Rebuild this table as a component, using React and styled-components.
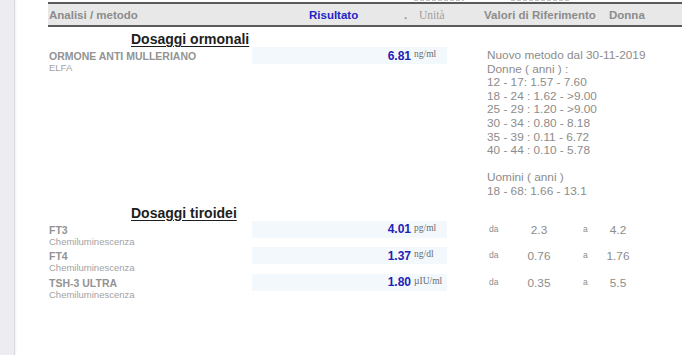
import React from "react";
import styled, { createGlobalStyle } from "styled-components";

const GlobalStyle = createGlobalStyle`
  html, body {
    margin: 0;
    padding: 0;
    background: #ffffff;
  }
  body {
    font-family: "Liberation Sans", Arial, sans-serif;
  }
`;

const ormone = {
  name: "ORMONE ANTI MULLERIANO",
  method: "ELFA",
  value: "6.81",
  unit: "ng/ml",
  notes: [
    "Nuovo metodo dal 30-11-2019",
    "Donne ( anni ) :",
    "12 - 17: 1.57 - 7.60",
    "18 - 24 : 1.62 - >9.00",
    "25 - 29 : 1.20 - >9.00",
    "30 - 34 : 0.80 - 8.18",
    "35 - 39 : 0.11 - 6.72",
    "40 - 44 : 0.10 - 5.78",
    "",
    "Uomini ( anni )",
    "18 - 68: 1.66 - 13.1",
  ],
};

const tiroidei = [
  { name: "FT3", method: "Chemiluminescenza", value: "4.01", unit: "pg/ml", from: "2.3", to: "4.2" },
  { name: "FT4", method: "Chemiluminescenza", value: "1.37", unit: "ng/dl", from: "0.76", to: "1.76" },
  { name: "TSH-3 ULTRA", method: "Chemiluminescenza", value: "1.80", unit: "µIU/ml", from: "0.35", to: "5.5" },
];

function App() {
  return (
    <>
      <GlobalStyle />
      <Page>
        <SideStrip />
        <Sheet>
          {/* bottom edge of the previous page line, scrolled mostly out of view */}
          <CutLine>
            <CutMark width={50} />
            <CutMark width={60} />
          </CutLine>
          <Report>
            <HeaderRow>
              <HeadCell width={260}>Analisi / metodo</HeadCell>
              <HeadCell width={95} blue>Risultato</HeadCell>
              <HeadCell width={15}>.</HeadCell>
              <HeadCell width={65} serif>Unità</HeadCell>
              <HeadCell width={125}>Valori di Riferimento</HeadCell>
              <HeadCell>Donna</HeadCell>
            </HeaderRow>

            <SectionTitle>
              <span>Dosaggi ormonali</span>
            </SectionTitle>
            <ResultRow>
              <NameCell>
                <TestName>{ormone.name}</TestName>
                <Method>{ormone.method}</Method>
              </NameCell>
              <ValueCell>
                <Value>{ormone.value}</Value>
                <Unit>{ormone.unit}</Unit>
              </ValueCell>
              <Notes>
                {ormone.notes.map((line, i) => (
                  <NoteLine key={i}>{line || "\u00a0"}</NoteLine>
                ))}
              </Notes>
            </ResultRow>

            <SectionTitle>
              <span>Dosaggi tiroidei</span>
            </SectionTitle>
            {tiroidei.map((t) => (
              <ResultRow key={t.name} compact>
                <NameCell>
                  <TestName>{t.name}</TestName>
                  <Method>{t.method}</Method>
                </NameCell>
                <ValueCell>
                  <Value>{t.value}</Value>
                  <Unit>{t.unit}</Unit>
                </ValueCell>
                <Range>
                  <RangeWord>da</RangeWord>
                  <RangeNum>{t.from}</RangeNum>
                  <RangeWord center>a</RangeWord>
                  <RangeNum>{t.to}</RangeNum>
                </Range>
              </ResultRow>
            ))}
          </Report>
        </Sheet>
      </Page>
    </>
  );
}

const Page = styled.div`
  display: flex;
  width: 700px;
  height: 355px;
  overflow: hidden;
  background: #ffffff;
`;

const SideStrip = styled.div`
  width: 14px;
  flex-shrink: 0;
  background: #ececf1;
  border-right: 1px solid #d9d9df;
  box-shadow: 1px 0 2px rgba(0, 0, 0, 0.06);
`;

const Sheet = styled.div`
  flex: 1;
  padding-left: 33px;
`;

const CutLine = styled.div`
  height: 2px;
  display: flex;
  align-items: flex-start;
  padding-left: 366px;
  gap: 47px;
`;

const CutMark = styled.div`
  width: ${(p) => p.width}px;
  height: 1px;
  background: repeating-linear-gradient(
    90deg,
    #c4c4c4 0 4px,
    transparent 4px 6px
  );
`;

const Report = styled.div`
  width: 634px;
`;

const HeaderRow = styled.div`
  display: flex;
  align-items: center;
  height: 21px;
  background: #e8e8e8;
  border-top: 2px solid #5a5a5a;
  border-bottom: 2px solid #5a5a5a;
`;

const HeadCell = styled.div`
  width: ${(p) => (p.width ? `${p.width}px` : "auto")};
  flex-shrink: 0;
  padding-left: 1px;
  box-sizing: border-box;
  font-family: ${(p) => (p.serif ? '"Liberation Serif", "Times New Roman", serif' : '"Liberation Sans", Arial, sans-serif')};
  font-size: 11.5px;
  font-weight: ${(p) => (p.serif ? 400 : 700)};
  color: ${(p) => (p.blue ? "#2424c4" : p.serif ? "#a0a0a0" : "#8c8c8c")};
  white-space: nowrap;
`;

const SectionTitle = styled.div`
  padding-left: 83px;
  margin-top: 3px;
  height: 17px;
  line-height: 17px;

  span {
    font-size: 14px;
    font-weight: 700;
    color: #1e1e1e;
    text-decoration: underline;
    text-underline-offset: 2px;
  }
`;

const ResultRow = styled.div`
  display: flex;
  align-items: flex-start;
  min-height: ${(p) => (p.compact ? "26.5px" : "auto")};
  padding-bottom: ${(p) => (p.compact ? "0" : "2px")};
`;

const NameCell = styled.div`
  width: 204px;
  flex-shrink: 0;
  padding-top: 3px;
  padding-left: 1px;
  box-sizing: border-box;
`;

const TestName = styled.div`
  font-size: 10.5px;
  line-height: 12px;
  font-weight: 700;
  color: #939393;
  white-space: nowrap;
`;

const Method = styled.div`
  font-size: 9.5px;
  line-height: 11px;
  color: #a2a2a2;
`;

const ValueCell = styled.div`
  width: 195px;
  height: 17px;
  flex-shrink: 0;
  display: flex;
  align-items: center;
  background: #f3f8fd;
`;

const Value = styled.div`
  width: 159px;
  text-align: right;
  font-size: 12px;
  font-weight: 700;
  color: #2222b4;
`;

const Unit = styled.div`
  margin-left: 3px;
  margin-top: -3px;
  font-family: "Liberation Serif", "Times New Roman", serif;
  font-size: 9.5px;
  color: #6a6a6a;
`;

const Notes = styled.div`
  padding-left: 40px;
  padding-top: 2px;
`;

const NoteLine = styled.div`
  font-size: 11.8px;
  line-height: 13.6px;
  color: #8c8c8c;
  white-space: nowrap;
`;

const Range = styled.div`
  display: flex;
  align-items: flex-start;
  padding-left: 42px;
  padding-top: 2px;
`;

const RangeWord = styled.div`
  width: ${(p) => (p.center ? "18px" : "30px")};
  padding-left: ${(p) => (p.center ? "3px" : "0")};
  box-sizing: border-box;
  font-size: 8.5px;
  line-height: 12px;
  color: #8c8c8c;
`;

const RangeNum = styled.div`
  width: 40px;
  margin-right: 21px;
  text-align: center;
  font-size: 11.8px;
  line-height: 14px;
  color: #8c8c8c;
`;

export default App;
